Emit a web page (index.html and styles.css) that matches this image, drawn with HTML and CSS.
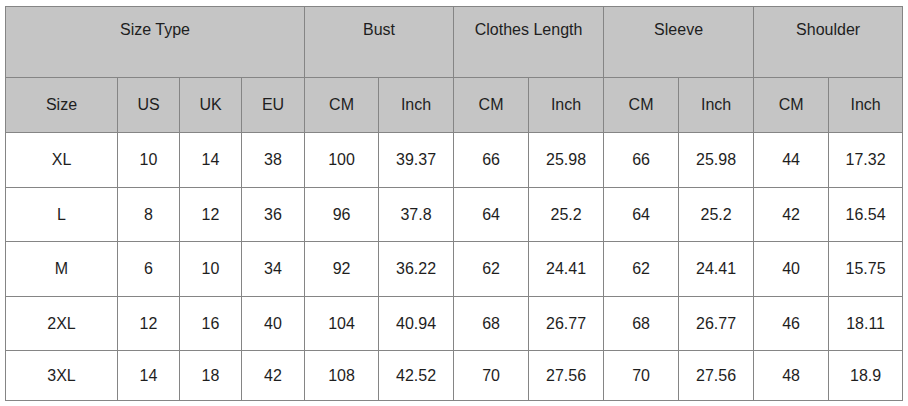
FILE: index.html
```html
<!DOCTYPE html>
<html>
<head>
<meta charset="utf-8">
<link rel="stylesheet" href="styles.css">
</head>
<body>
<table class="size-table">
  <colgroup>
    <col class="c-size"><col class="c62"><col class="c62"><col class="c63">
    <col class="c74"><col class="c75"><col class="c75"><col class="c75">
    <col class="c75"><col class="c75"><col class="c75"><col class="c74">
  </colgroup>
  <thead>
    <tr class="h1">
      <th colspan="4">Size Type</th>
      <th colspan="2">Bust</th>
      <th colspan="2">Clothes Length</th>
      <th colspan="2">Sleeve</th>
      <th colspan="2">Shoulder</th>
    </tr>
    <tr class="h2">
      <th>Size</th><th>US</th><th>UK</th><th>EU</th>
      <th>CM</th><th>Inch</th><th>CM</th><th>Inch</th>
      <th>CM</th><th>Inch</th><th>CM</th><th>Inch</th>
    </tr>
  </thead>
  <tbody>
    <tr class="r55"><td>XL</td><td>10</td><td>14</td><td>38</td><td>100</td><td>39.37</td><td>66</td><td>25.98</td><td>66</td><td>25.98</td><td>44</td><td>17.32</td></tr>
    <tr class="r54"><td>L</td><td>8</td><td>12</td><td>36</td><td>96</td><td>37.8</td><td>64</td><td>25.2</td><td>64</td><td>25.2</td><td>42</td><td>16.54</td></tr>
    <tr class="r55"><td>M</td><td>6</td><td>10</td><td>34</td><td>92</td><td>36.22</td><td>62</td><td>24.41</td><td>62</td><td>24.41</td><td>40</td><td>15.75</td></tr>
    <tr class="r54"><td>2XL</td><td>12</td><td>16</td><td>40</td><td>104</td><td>40.94</td><td>68</td><td>26.77</td><td>68</td><td>26.77</td><td>46</td><td>18.11</td></tr>
    <tr class="r50"><td>3XL</td><td>14</td><td>18</td><td>42</td><td>108</td><td>42.52</td><td>70</td><td>27.56</td><td>70</td><td>27.56</td><td>48</td><td>18.9</td></tr>
  </tbody>
</table>
</body>
</html>
```
FILE: styles.css
```css
html, body {
  margin: 0;
  padding: 0;
  background: #ffffff;
}
body {
  padding: 6px 0 0 5px;
  font-family: "Liberation Sans", Arial, sans-serif;
  font-size: 16px;
  color: #1e1e1e;
}
.size-table {
  border-collapse: collapse;
  table-layout: fixed;
  width: 898px;
}
.size-table th,
.size-table td {
  border: 1px solid #858585;
  padding: 0;
  text-align: center;
  vertical-align: middle;
  font-weight: normal;
  line-height: 18px;
  overflow: hidden;
  white-space: nowrap;
}
.size-table th {
  background: #c5c5c5;
}
.c-size { width: 112px; }
.c62 { width: 62px; }
.c63 { width: 63px; }
.c74 { width: 74px; }
.c75 { width: 75px; }
.h1 th {
  height: 71px;
  vertical-align: top;
  padding-top: 14px;
  box-sizing: border-box;
}
.h2 th { height: 55px; box-sizing: border-box; }
.r55 td { height: 55px; box-sizing: border-box; }
.r54 td { height: 54px; box-sizing: border-box; }
.r50 td { height: 50px; box-sizing: border-box; }
```
